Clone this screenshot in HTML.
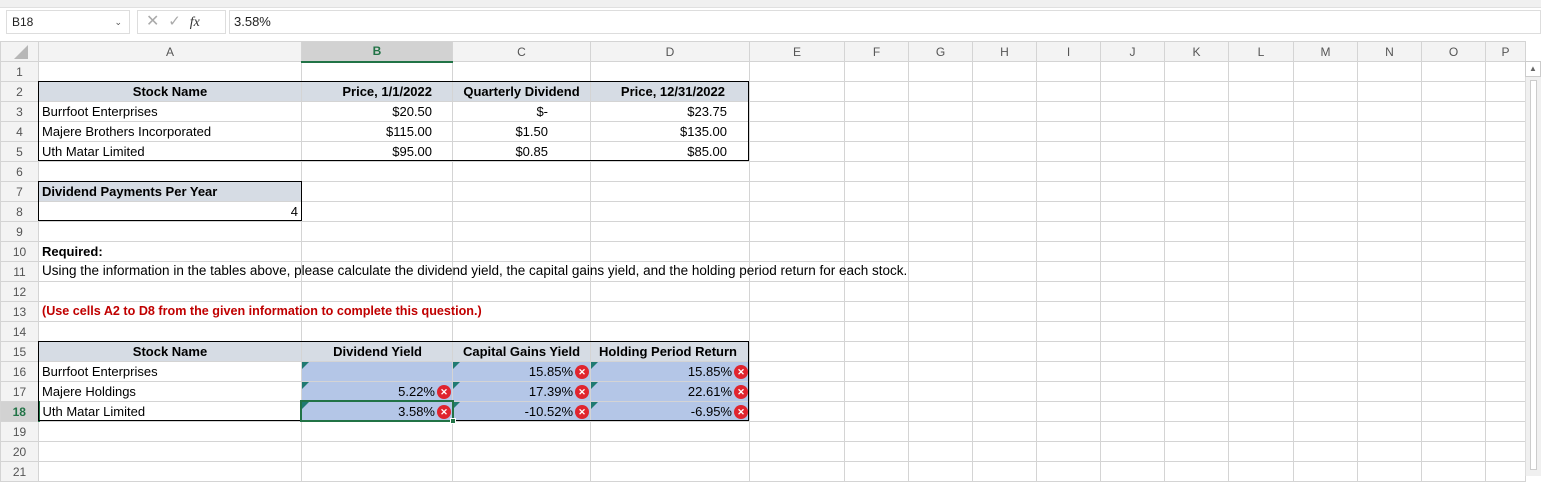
<!DOCTYPE html>
<html><head><meta charset="utf-8"><style>
*{box-sizing:border-box;margin:0;padding:0}
body{width:1541px;height:476px;overflow:hidden;background:#fff;font-family:"Liberation Sans",sans-serif;position:relative}
.a{position:absolute}
table{position:absolute;left:0;top:41px;border-collapse:collapse;table-layout:fixed;font-size:13px;color:#000}
tr{height:20px}
td{height:20px;max-height:20px;border:1px solid #d4d4d4;padding:0 3px;white-space:nowrap;overflow:hidden;line-height:18px}
tr.h td{background:#f3f3f3;color:#555;text-align:center;font-size:12px;border-color:#d4d4d4}
td.rh{background:#f3f3f3;color:#555;text-align:center;font-size:12px;padding:0}
.r{text-align:right}.c{text-align:center}.b{font-weight:bold}
.sh{background:#d6dce4}.bl{background:#b4c6e7}
.x{display:inline-block;width:14px;height:14px;border-radius:50%;background:#e0242e;color:#fff;font-size:9px;line-height:14px;text-align:center;font-weight:bold;vertical-align:top;margin-top:2px;margin-left:2px}
.tri{position:absolute;width:0;height:0;border-top:7px solid #207a72;border-right:7px solid transparent}
.nl{border-left-color:transparent}
</style></head><body>
<div class="a" style="left:0;top:0;width:1541px;height:8px;background:#f0f0f0;border-bottom:1px solid #e0e0e0"></div>
<div class="a" style="left:6px;top:10px;width:124px;height:24px;border:1px solid #ddd;font-size:12px;line-height:22px;padding-left:5px;color:#222">B18<span style="position:absolute;right:7px;top:0;font-size:9px;color:#555">&#8964;</span></div>
<div class="a" style="left:137px;top:10px;width:89px;height:24px;border:1px solid #ddd;color:#aaa;font-size:16px;line-height:22px;padding-left:8px">&#10005;&nbsp;&nbsp;<span style="font-size:15px">&#10003;</span>&nbsp;&nbsp;<i style="color:#333;font-family:'Liberation Serif',serif;font-size:14px">fx</i></div>
<div class="a" style="left:229px;top:10px;width:1312px;height:24px;border:1px solid #ddd;font-size:13px;line-height:22px;padding-left:4px;color:#222">3.58%</div>
<table>
<colgroup><col style="width:38px"><col style="width:263px"><col style="width:151px"><col style="width:138px"><col style="width:159px"><col style="width:95px"><col style="width:64px"><col style="width:64px"><col style="width:64px"><col style="width:64px"><col style="width:64px"><col style="width:64px"><col style="width:65px"><col style="width:64px"><col style="width:64px"><col style="width:64px"><col style="width:40px"></colgroup>
<tr class="h"><td></td><td>A</td><td style="background:#d2d2d2;color:#217346;font-weight:bold;border-bottom:2px solid #217346">B</td><td>C</td><td>D</td><td>E</td><td>F</td><td>G</td><td>H</td><td>I</td><td>J</td><td>K</td><td>L</td><td>M</td><td>N</td><td>O</td><td>P</td></tr>
<tr><td class="rh">1</td><td></td><td></td><td></td><td></td><td></td><td></td><td></td><td></td><td></td><td></td><td></td><td></td><td></td><td></td><td></td><td></td></tr>
<tr><td class="rh">2</td><td class="sh b c">Stock Name</td><td class="sh b r" style="padding-right:20px">Price, 1/1/2022</td><td class="sh b c">Quarterly Dividend</td><td class="sh b r" style="padding-right:24px">Price, 12/31/2022</td><td></td><td></td><td></td><td></td><td></td><td></td><td></td><td></td><td></td><td></td><td></td><td></td></tr>
<tr><td class="rh">3</td><td>Burrfoot Enterprises</td><td class="r" style="padding-right:20px">$20.50</td><td class="r" style="padding-right:42px">$-</td><td class="r" style="padding-right:22px">$23.75</td><td></td><td></td><td></td><td></td><td></td><td></td><td></td><td></td><td></td><td></td><td></td><td></td></tr>
<tr><td class="rh">4</td><td>Majere Brothers Incorporated</td><td class="r" style="padding-right:20px">$115.00</td><td class="r" style="padding-right:42px">$1.50</td><td class="r" style="padding-right:22px">$135.00</td><td></td><td></td><td></td><td></td><td></td><td></td><td></td><td></td><td></td><td></td><td></td><td></td></tr>
<tr><td class="rh">5</td><td>Uth Matar Limited</td><td class="r" style="padding-right:20px">$95.00</td><td class="r" style="padding-right:42px">$0.85</td><td class="r" style="padding-right:22px">$85.00</td><td></td><td></td><td></td><td></td><td></td><td></td><td></td><td></td><td></td><td></td><td></td><td></td></tr>
<tr><td class="rh">6</td><td></td><td></td><td></td><td></td><td></td><td></td><td></td><td></td><td></td><td></td><td></td><td></td><td></td><td></td><td></td><td></td></tr>
<tr><td class="rh">7</td><td class="sh b">Dividend Payments Per Year</td><td></td><td></td><td></td><td></td><td></td><td></td><td></td><td></td><td></td><td></td><td></td><td></td><td></td><td></td><td></td></tr>
<tr><td class="rh">8</td><td class="r">4</td><td></td><td></td><td></td><td></td><td></td><td></td><td></td><td></td><td></td><td></td><td></td><td></td><td></td><td></td><td></td></tr>
<tr><td class="rh">9</td><td></td><td></td><td></td><td></td><td></td><td></td><td></td><td></td><td></td><td></td><td></td><td></td><td></td><td></td><td></td><td></td></tr>
<tr><td class="rh">10</td><td class="b">Required:</td><td></td><td></td><td></td><td></td><td></td><td></td><td></td><td></td><td></td><td></td><td></td><td></td><td></td><td></td><td></td></tr>
<tr><td class="rh">11</td><td style="overflow:visible;position:relative"><span style="position:absolute;left:3px;top:0;font-size:13.5px">Using the information in the tables above, please calculate the dividend yield, the capital gains yield, and the holding period return for each stock.</span></td><td class="nl"></td><td class="nl"></td><td class="nl"></td><td class="nl"></td><td class="nl"></td><td></td><td></td><td></td><td></td><td></td><td></td><td></td><td></td><td></td><td></td></tr>
<tr><td class="rh">12</td><td></td><td></td><td></td><td></td><td></td><td></td><td></td><td></td><td></td><td></td><td></td><td></td><td></td><td></td><td></td><td></td></tr>
<tr><td class="rh">13</td><td class="b" style="color:#c00000;position:relative;overflow:visible"><span style="position:absolute;left:3px;top:0;font-size:12.6px">(Use cells A2 to D8 from the given information to complete this question.)</span></td><td class="nl"></td><td></td><td></td><td></td><td></td><td></td><td></td><td></td><td></td><td></td><td></td><td></td><td></td><td></td><td></td></tr>
<tr><td class="rh">14</td><td></td><td></td><td></td><td></td><td></td><td></td><td></td><td></td><td></td><td></td><td></td><td></td><td></td><td></td><td></td><td></td></tr>
<tr><td class="rh">15</td><td class="sh b c">Stock Name</td><td class="sh b r" style="padding-right:30px">Dividend Yield</td><td class="sh b c">Capital Gains Yield</td><td class="sh b r" style="padding-right:12px">Holding Period Return</td><td></td><td></td><td></td><td></td><td></td><td></td><td></td><td></td><td></td><td></td><td></td><td></td></tr>
<tr><td class="rh">16</td><td>Burrfoot Enterprises</td><td class="bl"></td><td class="bl r" style="padding-right:1px">15.85%<span class="x">&#10005;</span></td><td class="bl r" style="padding-right:1px">15.85%<span class="x">&#10005;</span></td><td></td><td></td><td></td><td></td><td></td><td></td><td></td><td></td><td></td><td></td><td></td><td></td></tr>
<tr><td class="rh">17</td><td>Majere Holdings</td><td class="bl r" style="padding-right:1px">5.22%<span class="x">&#10005;</span></td><td class="bl r" style="padding-right:1px">17.39%<span class="x">&#10005;</span></td><td class="bl r" style="padding-right:1px">22.61%<span class="x">&#10005;</span></td><td></td><td></td><td></td><td></td><td></td><td></td><td></td><td></td><td></td><td></td><td></td><td></td></tr>
<tr><td class="rh" style="color:#217346;font-weight:bold;background:#d2d2d2;border-right:2px solid #217346">18</td><td>Uth Matar Limited</td><td class="bl r" style="padding-right:1px">3.58%<span class="x">&#10005;</span></td><td class="bl r" style="padding-right:1px">-10.52%<span class="x">&#10005;</span></td><td class="bl r" style="padding-right:1px">-6.95%<span class="x">&#10005;</span></td><td></td><td></td><td></td><td></td><td></td><td></td><td></td><td></td><td></td><td></td><td></td><td></td></tr>
<tr><td class="rh">19</td><td></td><td></td><td></td><td></td><td></td><td></td><td></td><td></td><td></td><td></td><td></td><td></td><td></td><td></td><td></td><td></td></tr>
<tr><td class="rh">20</td><td></td><td></td><td></td><td></td><td></td><td></td><td></td><td></td><td></td><td></td><td></td><td></td><td></td><td></td><td></td><td></td></tr>
<tr><td class="rh">21</td><td></td><td></td><td></td><td></td><td></td><td></td><td></td><td></td><td></td><td></td><td></td><td></td><td></td><td></td><td></td><td></td></tr>
</table>
<div class="a" style="left:14px;top:45px;width:0;height:0;border-bottom:14px solid #b7b7b7;border-left:14px solid transparent"></div>
<div class="a" style="left:38px;top:81px;width:711px;height:80px;border:1px solid #000"></div>
<div class="a" style="left:38px;top:181px;width:264px;height:40px;border:1px solid #000"></div>
<div class="a" style="left:38px;top:341px;width:711px;height:80px;border:1px solid #000"></div>
<div class="tri" style="left:302px;top:362px"></div><div class="tri" style="left:302px;top:382px"></div><div class="tri" style="left:302px;top:402px"></div>
<div class="tri" style="left:453px;top:362px"></div><div class="tri" style="left:453px;top:382px"></div><div class="tri" style="left:453px;top:402px"></div>
<div class="tri" style="left:591px;top:362px"></div><div class="tri" style="left:591px;top:382px"></div><div class="tri" style="left:591px;top:402px"></div>
<div class="a" style="left:300px;top:400px;width:154px;height:22px;border:2px solid #217346"></div>
<div class="a" style="left:450px;top:418px;width:6px;height:6px;background:#217346;border:1px solid #fff"></div>
<div class="a" style="left:1525px;top:61px;width:16px;height:415px;background:#f0f0f0;border-left:1px solid #ddd"></div>
<div class="a" style="left:1525px;top:61px;width:16px;height:16px;background:#fff;border:1px solid #ccc;font-size:8px;color:#666;text-align:center;line-height:14px">&#9650;</div>
<div class="a" style="left:1530px;top:80px;width:7px;height:390px;background:#fff;border:1px solid #ccc"></div>
</body></html>
